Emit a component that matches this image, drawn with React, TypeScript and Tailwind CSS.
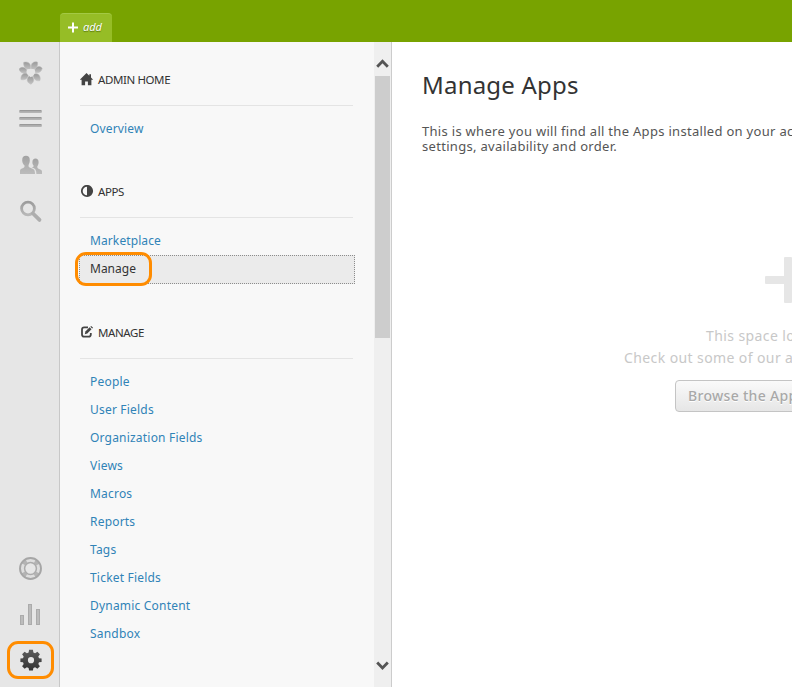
import React from "react";

type IconProps = { children: React.ReactNode; w?: number; h?: number; className?: string };

const Icon = ({ children, w = 24, h = 24, className = "" }: IconProps) => (
  <svg width={w} height={h} viewBox={`0 0 ${w} ${h}`} className={`block shrink-0 ${className}`}>
    {children}
  </svg>
);

const Shade = ({ id, from = "#a2a2a2", to = "#bcbcbc" }: { id: string; from?: string; to?: string }) => (
  <defs>
    <linearGradient id={id} x1="0" y1="0" x2="0" y2="1">
      <stop offset="0" stopColor={from} />
      <stop offset="1" stopColor={to} />
    </linearGradient>
  </defs>
);

const petals = [
  "M4.6 1.4C7.4.4 10.4 1.2 11.4 4.2L11.6 7.6L9.4 8.6C6.2 7.8 4.3 5.2 4.6 1.4Z",
  "M18.6 1.2C15.6.2 12.9 1.4 12.2 4.4L12.1 7.6L14.3 8.4C17.4 7.4 19.1 4.8 18.6 1.2Z",
  "M23.2 7.2C21.6 5 18.4 5 16.6 7.2L15.3 9.6L16.4 11.6C19.6 12.4 22.5 10.8 23.2 7.2Z",
  "M0 8.2C1.4 6 4.4 5.6 6.6 7.4L8.4 9.6L7.4 11.9C4.3 12.9 1.2 11.8 0 8.2Z",
  "M2 18.6C1.4 15.4 3 12.8 5.8 12.2L8.4 12.4L9.4 14.4C8.6 17.6 5.8 19.4 2 18.6Z",
  "M20.9 19.6C22 16.4 20.4 13.4 17.6 12.8L15.3 12.8L14.1 14.9C14.6 18.3 17.4 20.4 20.9 19.6Z",
  "M11.9 23.2C8.5 22 7.3 18.9 8.9 16.6L10.4 14.8L13 15.2C15.7 18 15.1 21.2 11.9 23.2Z",
];

const FlowerIcon = () => (
  <Icon>
    <Shade id="petal" from="#999999" to="#c2c2c2" />
    {petals.map((d) => (
      <path key={d} d={d} fill="url(#petal)" stroke="#bdbdbd" strokeWidth="0.5" />
    ))}
    <path d="M11.8 16.2C9.6 14.6 7.4 12.8 7.5 10.4C7.7 8 10.4 7.2 11.9 9.1C13.5 7.1 16.1 8.1 16.2 10.4C16.2 12.9 13.9 14.6 11.8 16.2Z" fill="#e6e6e6" />
  </Icon>
);

const MenuIcon = () => (
  <Icon>
    {[3, 10, 17].map((y) => (
      <g key={y}>
        <rect x="0" y={y} width="23" height="3" rx="1.5" fill="#b4b4b4" />
        <rect x="0.5" y={y} width="22" height="1.2" rx="0.6" fill="#999999" />
      </g>
    ))}
  </Icon>
);

const PeopleIcon = () => (
  <Icon>
    <Shade id="people" />
    <path
      fill="url(#people)"
      d="M3.2 7.2C3.2 4 4.6 2.8 7 2.8S10.8 4 10.8 7.2C10.8 9.7 9.9 11 9.5 12.2C9.4 14 10.3 14.6 13 15.4C15.5 16.2 16 17.6 16 21H1V18C1 16.1 2.6 15.7 4.2 15.1C5.4 14.5 5.8 13.8 5.4 12.3C4.2 11.1 3.2 9.6 3.2 7.2Z"
    />
    <path
      fill="url(#people)"
      d="M13.4 9.2C13.4 6.6 14.6 5.4 16.5 5.4S19.6 6.6 19.6 9.2C19.6 11.3 18.8 12.4 18.3 13.5C18.3 15 18.8 15.6 20.7 16.2C22.4 16.8 23 17.4 23 19V21H17.4C17.5 17.3 16.4 15.5 13.5 14.4L12.6 14C14.7 13.9 15 13.6 14.5 12.5C13.7 11.4 13.4 10.5 13.4 9.2Z"
    />
  </Icon>
);

const SearchIcon = () => (
  <Icon>
    <Shade id="search" from="#9c9c9c" to="#b8b8b8" />
    <circle cx="9" cy="9.5" r="6.4" fill="none" stroke="url(#search)" strokeWidth="2.8" />
    <path d="M14 14.5L20.5 20.9" stroke="#aeaeae" strokeWidth="3.8" strokeLinecap="round" />
  </Icon>
);

const HelpIcon = () => (
  <Icon>
    <circle cx="11.5" cy="12.5" r="8.2" fill="none" stroke="#dedede" strokeWidth="4" />
    <circle
      cx="11.5"
      cy="12.5"
      r="8.2"
      fill="none"
      stroke="#b4b4b4"
      strokeWidth="4"
      strokeDasharray="4.4 8.48"
      transform="rotate(29.6 11.5 12.5)"
    />
    <circle cx="11.5" cy="12.5" r="10.5" fill="none" stroke="#a6a6a6" strokeWidth="1.9" />
    <circle cx="11.5" cy="12.5" r="5.9" fill="none" stroke="#ababab" strokeWidth="1.5" />
  </Icon>
);

const ReportsIcon = () => (
  <Icon>
    {[
      [1.5, 13, 10],
      [9.5, 2, 21],
      [17.5, 7, 16],
    ].map(([x, y, h]) => (
      <rect key={x} x={x} y={y + 0.5} width="3" height={h - 1} fill="#bcbcbc" stroke="#ababab" />
    ))}
  </Icon>
);

const GearIcon = () => (
  <Icon>
    <Shade id="gear" from="#5b5b5b" to="#333333" />
    <path
      fill="url(#gear)"
      fillRule="evenodd"
      d="M10.1 1.8H13.9L14.4 4.6L16.1 5.3L18.4 3.8L20.9 6.2L19.3 8.6L20 10.2L22.6 10.6V13.9L20 14.3L19.3 16L20.9 18.3L18.4 20.8L16.1 19.2L14.4 19.9L13.9 22.6H10.1L9.6 19.9L7.9 19.2L5.6 20.8L3.1 18.3L4.7 16L4 14.3L1.4 13.9V10.6L4 10.2L4.7 8.6L3.1 6.2L5.6 3.8L7.9 5.3L9.6 4.6ZM12 9.1A3.1 3.1 0 1 0 12 15.3A3.1 3.1 0 1 0 12 9.1Z"
    />
  </Icon>
);

const HomeIcon = () => (
  <Icon w={14} h={14}>
    <path fill="#444" d="M6.5 0L9.3 2.8V1.2H11V4.5L13.2 6.7H11.4V12.2H7.9V8.4H5.1V12.2H1.6V6.7H-.2Z" />
  </Icon>
);

const ContrastIcon = () => (
  <Icon w={14} h={14}>
    <circle cx="7" cy="6" r="5.2" fill="none" stroke="#444" strokeWidth="1.8" />
    <path d="M7 .8A5.2 5.2 0 0 1 7 11.2Z" fill="#444" />
  </Icon>
);

const EditIcon = () => (
  <Icon w={14} h={14}>
    <path
      d="M8 1.4H4.2Q2 1.4 2 3.6V8.4Q2 10.6 4.2 10.6H8.6Q10.8 10.6 10.8 8.4V7"
      fill="none"
      stroke="#444"
      strokeWidth="1.8"
    />
    <path d="M4.8 8.2L5.4 5.4L9.6 1.3L11.5 3.2L7.3 7.5Z" fill="#444" />
    <path d="M10.3.8L11.2 0L13.1 1.8L12.2 2.6Z" fill="#444" />
  </Icon>
);

const sections = [
  {
    title: "ADMIN HOME",
    icon: <HomeIcon />,
    tracking: "tracking-[0.16px]",
    links: ["Overview"],
  },
  {
    title: "APPS",
    icon: <ContrastIcon />,
    tracking: "tracking-[0.1px]",
    links: ["Marketplace", "Manage"],
  },
  {
    title: "MANAGE",
    icon: <EditIcon />,
    tracking: "tracking-[0.2px]",
    links: [
      "People",
      "User Fields",
      "Organization Fields",
      "Views",
      "Macros",
      "Reports",
      "Tags",
      "Ticket Fields",
      "Dynamic Content",
      "Sandbox",
    ],
  },
];

function NavPanel() {
  return (
    <nav className="w-[314px] shrink-0 bg-[#f8f8f8] pl-5 pt-3">
      {sections.map((s) => (
        <section key={s.title} className="mb-[23px]">
          <h2 className="flex h-[52px] w-[273px] items-center gap-1 border-b border-[#e4e4e4] text-[11.5px] tracking-[-0.4px] text-[#333]">
            {s.icon}
            <span className="whitespace-nowrap">{s.title}</span>
          </h2>
          <ul className="pt-[9px]">
            {s.links.map((l) =>
              s.title === "APPS" && l === "Manage" ? (
                <li
                  key={l}
                  className="relative -ml-px flex h-[29px] w-[276px] items-center border border-dotted border-[#8c8c8c] bg-[#ebebeb] pb-px pl-2.5 text-[12px] text-[#333]"
                >
                  {l}
                  <span className="absolute -left-[5px] -top-[4px] h-[34px] w-[77px] rounded-[11px] border-3 border-[#ff8c00]" />
                </li>
              ) : (
                <li key={l} className={`flex h-7 items-center pl-2.5 text-[12px] text-[#3083b7] ${s.tracking}`}>
                  {l}
                </li>
              )
            )}
          </ul>
        </section>
      ))}
    </nav>
  );
}

function Scrollbar() {
  return (
    <div className="flex w-[18px] shrink-0 flex-col items-center border-r border-[#cccccc] bg-[#efefef]">
      <Icon w={16} h={34}>
        <path d="M2.2 24.7L7.5 19.2L12.8 24.7" fill="none" stroke="#555" strokeWidth="2.8" />
      </Icon>
      <div className="h-[262px] w-[15px] bg-[#cdcdcd]" />
      <Icon w={16} h={34} className="mt-auto">
        <path d="M2.2 9.5L7.5 15L12.8 9.5" fill="none" stroke="#555" strokeWidth="2.8" />
      </Icon>
    </div>
  );
}

export default function App() {
  return (
    <div className="flex h-[687px] w-[792px] flex-col overflow-hidden bg-white font-['Noto_Sans','Open_Sans',sans-serif]">
      <header className="flex h-[42px] shrink-0 items-end bg-[#78a300] pl-[60px]">
        <button className="flex h-[29px] w-[52px] items-center gap-1 rounded-t-[4px] border-t border-[#a3c944] bg-[#96bd26] pb-px pl-[7px] text-[11px] italic text-white [text-shadow:0_1px_1px_#55750b]">
          <Icon w={12} h={12}>
            <path d="M6 0.5V10.5M1 5.5H11" stroke="white" strokeWidth="2" />
          </Icon>
          add
        </button>
      </header>
      <div className="flex min-h-0 flex-1">
        <aside className="flex w-[60px] shrink-0 flex-col items-start border-r border-[#c8c8c8] bg-[#e6e6e6] pb-[15px] pl-[19px] pt-[19px]">
          <div className="flex flex-col gap-[22px]">
            <FlowerIcon />
            <MenuIcon />
            <PeopleIcon />
            <SearchIcon />
          </div>
          <div className="mt-auto flex flex-col gap-[22px]">
            <HelpIcon />
            <ReportsIcon />
            <div className="relative">
              <GearIcon />
              <span className="absolute -left-[12px] -top-[7px] h-[38px] w-[47px] rounded-[11px] border-3 border-[#ff8c00]" />
            </div>
          </div>
        </aside>
        <NavPanel />
        <Scrollbar />
        <main className="flex min-w-0 flex-1 flex-col overflow-hidden pl-[30px] pt-[25px]">
          <h1 className="whitespace-nowrap text-[24px] leading-9 tracking-[0.2px] text-[#333]">Manage Apps</h1>
          <p className="mt-[21px] whitespace-nowrap text-[13px] leading-[15px] tracking-[0.3px] text-[#555]">
            This is where you will find all the Apps installed on your account. You can change their
            <br />
            settings, availability and order.
          </p>
          <div className="ml-[172px] mt-[103px] flex w-[388px] flex-col items-center whitespace-nowrap">
            <Icon w={46} h={46}>
              <path
                d="M20 0H26Q27 0 27 1V19H45Q46 19 46 20V26Q46 27 45 27H27V45Q27 46 26 46H20Q19 46 19 45V27H1Q0 27 0 26V20Q0 19 1 19H19V1Q19 0 20 0Z"
                fill="#e6e6e6"
              />
            </Icon>
            <p className="mt-[22px] w-[388px] pl-[112px] text-[14px] leading-[22px] tracking-[0.4px] text-[#c8c8c8]">
              This space looks empty
            </p>
            <p className="w-[388px] pl-[30px] text-[14px] leading-[22px] tracking-[0.4px] text-[#c8c8c8]">
              Check out some of our awesome apps
            </p>
            <button className="mt-[11px] h-8 w-[226px] rounded-[4px] border border-[#c4c4c4] bg-linear-to-b from-[#fafafa] to-[#e6e6e6] pb-px pl-3 text-left text-[14px] font-medium tracking-[0.3px] text-[#a8a8a8] [text-shadow:0_1px_0_#fff]">
              Browse the Apps Marketplace
            </button>
          </div>
        </main>
      </div>
    </div>
  );
}
